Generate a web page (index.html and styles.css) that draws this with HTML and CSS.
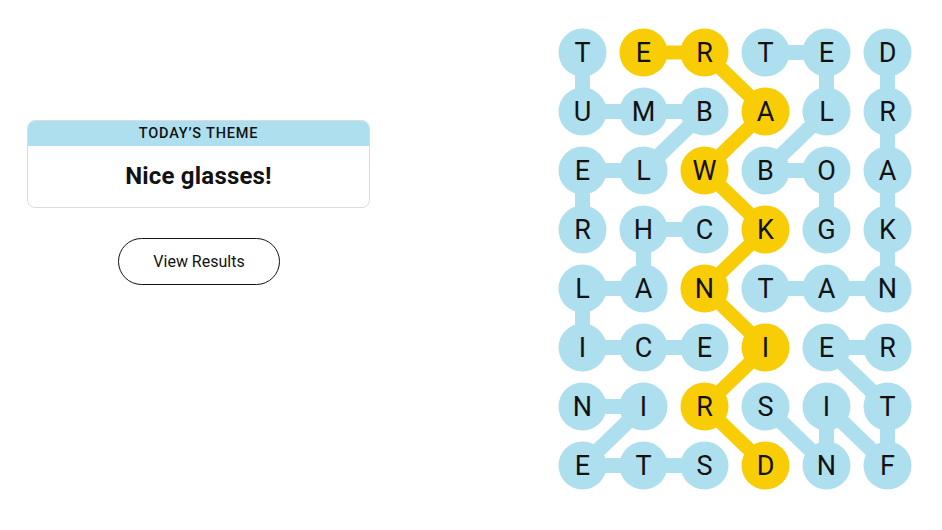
FILE: index.html
```html
<!DOCTYPE html>
<html lang="en">
<head>
<meta charset="utf-8">
<title>Strands</title>
<link rel="stylesheet" href="styles.css">
</head>
<body>
<main class="page">
  <section class="left">
    <div class="theme-card">
      <div class="theme-head">TODAY’S THEME</div>
      <div class="theme-body">Nice glasses!</div>
    </div>
    <button class="results" type="button">View Results</button>
  </section>
  <section class="board">
    <svg class="board-svg" width="354" height="462" viewBox="0 0 354 462" xmlns="http://www.w3.org/2000/svg">
      <g class="links">
        <polyline points="24.5,24.5 24.5,83.5 85.5,83.5 146.5,83.5 85.5,142.5 24.5,142.5 24.5,201.5"/>
        <polyline points="146.5,201.5 85.5,201.5 85.5,260.5 24.5,260.5 24.5,319.5 85.5,319.5 146.5,319.5"/>
        <polyline points="146.5,437.5 85.5,437.5 24.5,437.5 85.5,378.5 24.5,378.5"/>
        <polyline points="268.5,201.5 268.5,142.5 207.5,142.5 268.5,83.5 268.5,24.5 207.5,24.5"/>
        <polyline points="207.5,260.5 268.5,260.5 329.5,260.5 329.5,24.5"/>
        <polyline points="207.5,378.5 268.5,437.5 268.5,378.5 329.5,437.5 329.5,378.5 268.5,319.5 329.5,319.5"/>
      </g>
      <g class="links span">
        <polyline points="85.5,24.5 146.5,24.5 207.5,83.5 146.5,142.5 207.5,201.5 146.5,260.5 207.5,319.5 146.5,378.5 207.5,437.5"/>
      </g>
      <g class="dots">
        <circle cx="24.5" cy="24.5" r="24"/><circle class="gold" cx="85.5" cy="24.5" r="24"/><circle class="gold" cx="146.5" cy="24.5" r="24"/><circle cx="207.5" cy="24.5" r="24"/><circle cx="268.5" cy="24.5" r="24"/><circle cx="329.5" cy="24.5" r="24"/>
        <circle cx="24.5" cy="83.5" r="24"/><circle cx="85.5" cy="83.5" r="24"/><circle cx="146.5" cy="83.5" r="24"/><circle class="gold" cx="207.5" cy="83.5" r="24"/><circle cx="268.5" cy="83.5" r="24"/><circle cx="329.5" cy="83.5" r="24"/>
        <circle cx="24.5" cy="142.5" r="24"/><circle cx="85.5" cy="142.5" r="24"/><circle class="gold" cx="146.5" cy="142.5" r="24"/><circle cx="207.5" cy="142.5" r="24"/><circle cx="268.5" cy="142.5" r="24"/><circle cx="329.5" cy="142.5" r="24"/>
        <circle cx="24.5" cy="201.5" r="24"/><circle cx="85.5" cy="201.5" r="24"/><circle cx="146.5" cy="201.5" r="24"/><circle class="gold" cx="207.5" cy="201.5" r="24"/><circle cx="268.5" cy="201.5" r="24"/><circle cx="329.5" cy="201.5" r="24"/>
        <circle cx="24.5" cy="260.5" r="24"/><circle cx="85.5" cy="260.5" r="24"/><circle class="gold" cx="146.5" cy="260.5" r="24"/><circle cx="207.5" cy="260.5" r="24"/><circle cx="268.5" cy="260.5" r="24"/><circle cx="329.5" cy="260.5" r="24"/>
        <circle cx="24.5" cy="319.5" r="24"/><circle cx="85.5" cy="319.5" r="24"/><circle cx="146.5" cy="319.5" r="24"/><circle class="gold" cx="207.5" cy="319.5" r="24"/><circle cx="268.5" cy="319.5" r="24"/><circle cx="329.5" cy="319.5" r="24"/>
        <circle cx="24.5" cy="378.5" r="24"/><circle cx="85.5" cy="378.5" r="24"/><circle class="gold" cx="146.5" cy="378.5" r="24"/><circle cx="207.5" cy="378.5" r="24"/><circle cx="268.5" cy="378.5" r="24"/><circle cx="329.5" cy="378.5" r="24"/>
        <circle cx="24.5" cy="437.5" r="24"/><circle cx="85.5" cy="437.5" r="24"/><circle cx="146.5" cy="437.5" r="24"/><circle class="gold" cx="207.5" cy="437.5" r="24"/><circle cx="268.5" cy="437.5" r="24"/><circle cx="329.5" cy="437.5" r="24"/>
      </g>
      <g class="letters">
        <text x="24.5" y="34">T</text><text x="85.5" y="34">E</text><text x="146.5" y="34">R</text><text x="207.5" y="34">T</text><text x="268.5" y="34">E</text><text x="329.5" y="34">D</text>
        <text x="24.5" y="93">U</text><text x="85.5" y="93">M</text><text x="146.5" y="93">B</text><text x="207.5" y="93">A</text><text x="268.5" y="93">L</text><text x="329.5" y="93">R</text>
        <text x="24.5" y="152">E</text><text x="85.5" y="152">L</text><text x="146.5" y="152">W</text><text x="207.5" y="152">B</text><text x="268.5" y="152">O</text><text x="329.5" y="152">A</text>
        <text x="24.5" y="211">R</text><text x="85.5" y="211">H</text><text x="146.5" y="211">C</text><text x="207.5" y="211">K</text><text x="268.5" y="211">G</text><text x="329.5" y="211">K</text>
        <text x="24.5" y="270">L</text><text x="85.5" y="270">A</text><text x="146.5" y="270">N</text><text x="207.5" y="270">T</text><text x="268.5" y="270">A</text><text x="329.5" y="270">N</text>
        <text x="24.5" y="329">I</text><text x="85.5" y="329">C</text><text x="146.5" y="329">E</text><text x="207.5" y="329">I</text><text x="268.5" y="329">E</text><text x="329.5" y="329">R</text>
        <text x="24.5" y="388">N</text><text x="85.5" y="388">I</text><text x="146.5" y="388">R</text><text x="207.5" y="388">S</text><text x="268.5" y="388">I</text><text x="329.5" y="388">T</text>
        <text x="24.5" y="447">E</text><text x="85.5" y="447">T</text><text x="146.5" y="447">S</text><text x="207.5" y="447">D</text><text x="268.5" y="447">N</text><text x="329.5" y="447">F</text>
      </g>
    </svg>
  </section>
</main>
</body>
</html>
```
FILE: styles.css
```css
* { box-sizing: border-box; }

html, body {
  margin: 0;
  padding: 0;
  background: #ffffff;
}

body {
  font-family: Roboto, "Liberation Sans", Arial, sans-serif;
  color: #121212;
}

.page {
  display: flex;
  align-items: flex-start;
  width: 942px;
  height: 530px;
  padding: 28px 0 0 27px;
}

.left {
  width: 343px;
  margin-top: 92px;
  display: flex;
  flex-direction: column;
  align-items: center;
}

.theme-card {
  width: 343px;
  border: 1px solid #dcdcdc;
  border-radius: 8px;
  overflow: hidden;
}

.theme-head {
  height: 25px;
  background: #aedfee;
  text-align: center;
  font-size: 14.5px;
  font-weight: 500;
  letter-spacing: 0.8px;
  line-height: 26px;
  color: #121212;
}

.theme-body {
  height: 61px;
  display: flex;
  align-items: center;
  justify-content: center;
  font-size: 24px;
  font-weight: 700;
  letter-spacing: 0.2px;
  color: #121212;
  padding-bottom: 1px;
}

.results {
  margin-top: 30px;
  width: 162px;
  height: 47px;
  border: 1px solid #121212;
  border-radius: 24px;
  background: #ffffff;
  font-family: Roboto, "Liberation Sans", Arial, sans-serif;
  font-size: 16px;
  color: #121212;
  padding: 0 0 0 1px;
}

.board {
  margin-left: 188px;
}

.board-svg {
  display: block;
}

.links polyline {
  fill: none;
  stroke: #aedfee;
  stroke-width: 15;
  stroke-linejoin: round;
}

.links.span polyline {
  stroke: #f8cd05;
  stroke-width: 14;
}

.dots circle {
  fill: #aedfee;
}

.dots circle.gold {
  fill: #f8cd05;
}

.letters text {
  font-family: Roboto, "Liberation Sans", Arial, sans-serif;
  font-size: 27px;
  font-weight: 400;
  fill: #121212;
  text-anchor: middle;
}
```
